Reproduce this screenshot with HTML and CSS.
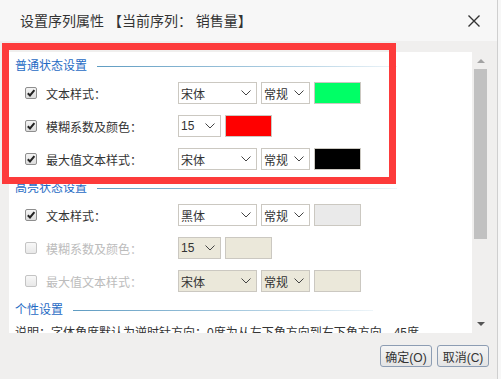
FILE: index.html
```html
<!doctype html>
<html>
<head>
<meta charset="utf-8">
<title>设置序列属性</title>
<link rel="stylesheet" href="styles.css">
</head>
<body>
<div class="dialog">
  <div class="titlebar">
    <span class="title">设置序列属性 【当前序列： 销售量】</span>
    <svg class="close" width="14" height="14" viewBox="0 0 14 14"><path d="M1.5 1.5 L12.5 12.5 M12.5 1.5 L1.5 12.5" stroke="#333" stroke-width="1.4" fill="none"/></svg>
  </div>

  <div class="main">
    <div class="scroller">
      <div class="panel">
        <div class="sec-head first"><span>普通状态设置</span><i class="rule"></i></div>
        <div class="group">
          <div class="row">
            <span class="check on"><svg width="12" height="12" viewBox="0 0 12 12"><path d="M2.8 6.2 L5 8.4 L9.4 3.2" stroke="#222" stroke-width="2" fill="none"/></svg></span>
            <span class="label">文本样式：</span>
            <div class="sel w-font">宋体<svg class="caret" width="10" height="6" viewBox="0 0 10 6"><path d="M0.5 0.5 L5 5 L9.5 0.5" stroke="#444" fill="none"/></svg></div>
            <div class="sel w-style">常规<svg class="caret" width="10" height="6" viewBox="0 0 10 6"><path d="M0.5 0.5 L5 5 L9.5 0.5" stroke="#444" fill="none"/></svg></div>
            <div class="swatch" style="background:#00ff66"></div>
          </div>
          <div class="row">
            <span class="check on"><svg width="12" height="12" viewBox="0 0 12 12"><path d="M2.8 6.2 L5 8.4 L9.4 3.2" stroke="#222" stroke-width="2" fill="none"/></svg></span>
            <span class="label">模糊系数及颜色：</span>
            <div class="sel w-num">15<svg class="caret" width="10" height="6" viewBox="0 0 10 6"><path d="M0.5 0.5 L5 5 L9.5 0.5" stroke="#444" fill="none"/></svg></div>
            <div class="swatch" style="background:#ff0000"></div>
          </div>
          <div class="row">
            <span class="check on"><svg width="12" height="12" viewBox="0 0 12 12"><path d="M2.8 6.2 L5 8.4 L9.4 3.2" stroke="#222" stroke-width="2" fill="none"/></svg></span>
            <span class="label">最大值文本样式：</span>
            <div class="sel w-font">宋体<svg class="caret" width="10" height="6" viewBox="0 0 10 6"><path d="M0.5 0.5 L5 5 L9.5 0.5" stroke="#444" fill="none"/></svg></div>
            <div class="sel w-style">常规<svg class="caret" width="10" height="6" viewBox="0 0 10 6"><path d="M0.5 0.5 L5 5 L9.5 0.5" stroke="#444" fill="none"/></svg></div>
            <div class="swatch" style="background:#000000"></div>
          </div>
        </div>

        <div class="sec-head"><span>高亮状态设置</span><i class="rule"></i></div>
        <div class="group">
          <div class="row">
            <span class="check on"><svg width="12" height="12" viewBox="0 0 12 12"><path d="M2.8 6.2 L5 8.4 L9.4 3.2" stroke="#222" stroke-width="2" fill="none"/></svg></span>
            <span class="label">文本样式：</span>
            <div class="sel w-font">黑体<svg class="caret" width="10" height="6" viewBox="0 0 10 6"><path d="M0.5 0.5 L5 5 L9.5 0.5" stroke="#444" fill="none"/></svg></div>
            <div class="sel w-style">常规<svg class="caret" width="10" height="6" viewBox="0 0 10 6"><path d="M0.5 0.5 L5 5 L9.5 0.5" stroke="#444" fill="none"/></svg></div>
            <div class="swatch" style="background:#eaeaea"></div>
          </div>
          <div class="row off">
            <span class="check"></span>
            <span class="label">模糊系数及颜色：</span>
            <div class="sel w-num">15<svg class="caret" width="10" height="6" viewBox="0 0 10 6"><path d="M0.5 0.5 L5 5 L9.5 0.5" stroke="#444" fill="none"/></svg></div>
            <div class="swatch"></div>
          </div>
          <div class="row off">
            <span class="check"></span>
            <span class="label">最大值文本样式：</span>
            <div class="sel w-font">宋体<svg class="caret" width="10" height="6" viewBox="0 0 10 6"><path d="M0.5 0.5 L5 5 L9.5 0.5" stroke="#444" fill="none"/></svg></div>
            <div class="sel w-style">常规<svg class="caret" width="10" height="6" viewBox="0 0 10 6"><path d="M0.5 0.5 L5 5 L9.5 0.5" stroke="#444" fill="none"/></svg></div>
            <div class="swatch"></div>
          </div>
        </div>

        <div class="sec-head"><span>个性设置</span><i class="rule"></i></div>
        <p class="note">说明：字体角度默认为逆时针方向：0度为从左下角方向到右下角方向，45度</p>
      </div>
      <div class="scrollbar">
        <i class="arrow up"></i>
        <i class="thumb"></i>
        <i class="arrow down"></i>
      </div>
    </div>

    <div class="buttons">
      <button class="btn">确定(O)</button>
      <button class="btn">取消(C)</button>
    </div>
  </div>

  <div class="highlight"></div>
</div>
</body>
</html>
```

FILE: styles.css
```css
body {
  margin: 0;
  background: #f7f7f7;
  font-family: "Liberation Sans", "Noto Sans CJK SC", sans-serif;
  font-size: 12px;
  color: #333;
}
.dialog {
  position: relative;
  width: 497px;
  height: 379px;
  background: #f0efee;
  border-right: 1px solid #cfcfcf;
}
.titlebar {
  height: 41px;
  background: #f7f7f7;
  display: flex;
  align-items: center;
  justify-content: space-between;
  padding: 0 16px 0 20px;
}
.title {
  font-size: 14px;
  color: #333;
  margin-top: -1px;
}
.close {
  display: block;
}
.main {
  padding: 11px 8px 0 9px;
}
.scroller {
  display: flex;
  height: 281px;
}
.panel {
  width: 464px;
  height: 281px;
  background: #fff;
  overflow: hidden;
}
.sec-head {
  display: flex;
  align-items: center;
  height: 20px;
  margin: 6px 0 8px 6px;
  color: #1f6bc4;
  font-size: 12px;
}
.sec-head.first {
  margin-top: 2px;
}
.rule {
  display: block;
  width: 300px;
  height: 1px;
  margin: 4px 0 0 10px;
  background: linear-gradient(to right, #5f9cc2, #b9d5e6 70%, #eef5f9);
}
.group {
  display: flex;
  flex-direction: column;
  gap: 11px;
}
.row {
  display: flex;
  align-items: center;
  height: 22px;
}
.check {
  box-sizing: border-box;
  width: 12px;
  height: 12px;
  margin-left: 16px;
  border: 1px solid #8e8e8e;
  border-radius: 2px;
  background: linear-gradient(#f4f4f4, #dcdcdc);
  display: flex;
  align-items: center;
  justify-content: center;
}
.check svg {
  display: block;
  margin: -1px;
}
.row.off .check {
  border-color: #c4c4c4;
  background: linear-gradient(#f8f8f8, #e8e8e8);
}
.label {
  width: 132px;
  margin-left: 9px;
  color: #333;
}
.row.off .label {
  color: #bcbcbc;
}
.sel {
  box-sizing: border-box;
  height: 22px;
  border: 1px solid #cbc8c1;
  background: #fff;
  display: flex;
  align-items: center;
  justify-content: space-between;
  padding: 0 5px 0 2px;
  margin-right: 4px;
  font-size: 12px;
  color: #333;
}
.w-font { width: 79px; }
.w-style { width: 49px; }
.w-num { width: 43px; }
.caret {
  display: block;
}
.row.off .sel {
  background: #ebe8da;
}
.swatch {
  box-sizing: border-box;
  width: 47px;
  height: 22px;
  border: 1px solid #cbc8c1;
  background: #ebe8da;
}
.note {
  margin: 0 0 0 6px;
  line-height: 14px;
  white-space: nowrap;
}
.scrollbar {
  position: relative;
  width: 17px;
  height: 281px;
}
.arrow {
  position: absolute;
  left: 5px;
  width: 0;
  height: 0;
  border-left: 4px solid transparent;
  border-right: 4px solid transparent;
}
.arrow.up {
  top: 7px;
  border-bottom: 4px solid #a3a3a3;
}
.arrow.down {
  bottom: 7px;
  border-top: 4px solid #555;
}
.thumb {
  position: absolute;
  left: 2px;
  top: 17px;
  width: 13px;
  height: 170px;
  background: #c1c1c1;
}
.buttons {
  display: flex;
  justify-content: flex-end;
  gap: 5px;
  padding-top: 12px;
}
.btn {
  box-sizing: border-box;
  height: 22px;
  padding: 0;
  width: 52px;
  white-space: nowrap;
  border: 1px solid #8d9db3;
  border-radius: 3px;
  background: linear-gradient(#f5f5f5, #e4e4e4);
  font-family: "Liberation Sans", "Noto Sans CJK SC", sans-serif;
  font-size: 12px;
  color: #333;
}
.highlight {
  position: absolute;
  left: 2px;
  top: 43px;
  width: 380px;
  height: 127px;
  border: 7px solid #fd3b3b;
}
```
